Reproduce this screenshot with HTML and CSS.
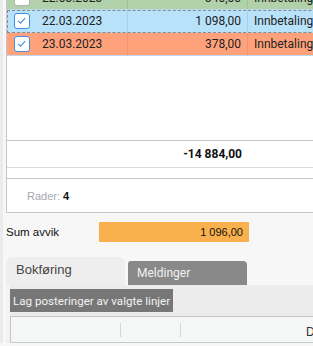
FILE: index.html
```html
<!DOCTYPE html>
<html lang="no">
<head>
    <meta charset="UTF-8">
    <meta name="viewport" content="width=device-width, initial-scale=1.0">
    <title>Bankavstemming</title>
    <link rel="stylesheet" href="styles.css">
</head>
<body>
    <div class="page">
        <!-- Transaction grid -->
        <div class="grid">
            <div class="grid-body">
                <div class="row row-green">
                    <div class="cell cell-date"><span class="check"></span>22.03.2023</div>
                    <div class="cell cell-amount">340,00</div>
                    <div class="cell cell-text">Innbetaling</div>
                </div>
                <div class="row row-blue row-focus">
                    <div class="cell cell-date">
                        <span class="check checked"><svg viewBox="0 0 16 16" width="14" height="14"><polyline points="3.5,7.8 6.3,10.4 11.6,4.8" /></svg></span>22.03.2023
                    </div>
                    <div class="cell cell-amount">1 098,00</div>
                    <div class="cell cell-text">Innbetaling</div>
                </div>
                <div class="row row-orange">
                    <div class="cell cell-date">
                        <span class="check checked"><svg viewBox="0 0 16 16" width="14" height="14"><polyline points="3.5,7.8 6.3,10.4 11.6,4.8" /></svg></span>23.03.2023
                    </div>
                    <div class="cell cell-amount">378,00</div>
                    <div class="cell cell-text">Innbetaling</div>
                </div>
            </div>
            <div class="grid-sum">
                <div class="cell cell-date"></div>
                <div class="cell cell-amount">-14 884,00</div>
            </div>
            <div class="grid-spacer"></div>
            <div class="grid-footer">
                <span class="footer-label">Rader:</span> <span class="footer-count">4</span>
            </div>
        </div>

        <!-- Deviation -->
        <div class="deviation">
            <span class="deviation-label">Sum avvik</span>
            <span class="deviation-value">1 096,00</span>
        </div>

        <!-- Tabs -->
        <div class="tabs">
            <div class="tab tab-active">Bokføring</div>
            <div class="tab tab-inactive">Meldinger</div>
        </div>
        <div class="tab-panel">
            <div class="toolbar">
                <button class="btn">Lag posteringer av valgte linjer</button>
            </div>
            <div class="subgrid">
                <div class="subgrid-head">
                    <div class="head-cell head-1"></div>
                    <div class="head-cell head-2"></div>
                    <div class="head-cell head-3"></div>
                    <div class="head-cell head-4">Debet</div>
                </div>
            </div>
        </div>
    </div>
</body>
</html>
```

FILE: styles.css
```css
html, body {
    margin: 0;
    padding: 0;
}
body {
    background-color: #f7f7f7;
    font-family: "Liberation Sans", Arial, sans-serif;
    color: #222;
    overflow: hidden;
    height: 346px;
}
.page {
    border-left: 3px solid #ebebeb;
    padding-left: 3px;
}

/* grid */
.grid {
    margin-top: -13px;
    width: 420px;
    background: #fff;
    border-left: 1px solid #c3c7cb;
    font-family: Roboto, "Liberation Sans", sans-serif;
    font-size: 12px;
}
.grid-body {
    height: 153px;
}
.row {
    display: flex;
    height: 23px;
    box-sizing: border-box;
    border-bottom: 1px solid #bcd8ea;
}
.row-green { background-color: #b0d1aa; }
.row-blue { background-color: #b8e1fa; }
.row-orange { background-color: #ffa27b; }
.row-focus {
    outline: 1px dashed #8a8a8a;
    outline-offset: -1px;
}
.cell {
    display: flex;
    align-items: center;
    box-sizing: border-box;
    white-space: nowrap;
    flex-shrink: 0;
}
.cell-date {
    width: 121px;
    padding-left: 7px;
    border-right: 1px solid rgba(0,0,0,0.08);
}
.cell-amount {
    width: 120px;
    justify-content: flex-end;
    padding-right: 6px;
    border-right: 1px solid rgba(0,0,0,0.08);
}
.cell-text {
    padding-left: 6px;
}
.check {
    width: 16px;
    height: 16px;
    box-sizing: border-box;
    border: 1px solid #b5b5b5;
    border-radius: 3px;
    background: #fff;
    margin-right: 12px;
    display: flex;
    align-items: center;
    justify-content: center;
}
.check.checked {
    border-color: #3b90e4;
}
.check svg polyline {
    fill: none;
    stroke: #3b90e4;
    stroke-width: 1.3;
}

.grid-sum {
    display: flex;
    height: 28px;
    box-sizing: border-box;
    border-top: 1px solid #c3c7cb;
    border-bottom: 1px solid #dcdcdc;
    font-weight: bold;
    color: #111;
}
.grid-sum .cell { border-right: none; }
.grid-spacer {
    height: 10px;
}
.grid-footer {
    height: 35px;
    box-sizing: border-box;
    border-top: 1px solid #c3c7cb;
    border-bottom: 1px solid #c3c7cb;
    display: flex;
    align-items: center;
    padding-left: 20px;
    font-family: "Liberation Sans", Arial, sans-serif;
    font-size: 11px;
    gap: 3px;
}
.footer-label { color: #a6a9ae; }
.footer-count { color: #111; font-weight: bold; }

/* deviation */
.deviation {
    display: flex;
    align-items: center;
    margin-top: 9px;
    font-size: 11.5px;
}
.deviation-label {
    width: 93px;
    color: #111;
}
.deviation-value {
    width: 150px;
    height: 20px;
    box-sizing: border-box;
    background-color: #f8b14c;
    text-align: right;
    padding-right: 6px;
    line-height: 20px;
    font-size: 11px;
    color: #111;
}

/* tabs */
.tabs {
    display: flex;
    align-items: flex-end;
    gap: 3px;
    margin-top: 15px;
    height: 28px;
}
.tab {
    width: 119px;
    box-sizing: border-box;
    flex-shrink: 0;
}
.tab-active {
    height: 28px;
    background-color: #eeeeee;
    border-radius: 6px 6px 0 0;
    padding: 5px 0 0 10px;
    font-size: 13px;
    color: #444;
}
.tab-inactive {
    height: 24px;
    background-color: #898989;
    border-radius: 3px 4px 0 0;
    padding: 5px 0 0 9px;
    font-family: Roboto, "Liberation Sans", sans-serif;
    font-size: 12px;
    color: #f2f2f2;
}
.tab-panel {
    background-color: #f3f3f3;
    padding-left: 4px;
}
.toolbar {
    background-color: #ececec;
    padding: 4px 0 4px 0;
}
.btn {
    display: block;
    height: 23px;
    margin: 0;
    border: none;
    padding: 0 3px;
    background-color: #777777;
    color: #f3f3f3;
    font-family: Roboto, "Liberation Sans", sans-serif;
    font-size: 11.6px;
}
.subgrid {
    background-color: #f5f6f6;
    border-left: 1px solid #c3c7cb;
    border-top: 1px solid #c3c7cb;
}
.subgrid-head {
    display: flex;
    height: 26px;
    box-sizing: border-box;
    border-bottom: 1px solid #c8cacc;
    font-size: 12px;
    color: #333;
}
.head-cell {
    height: 14px;
    margin-top: 6px;
    box-sizing: border-box;
    line-height: 14px;
    white-space: nowrap;
    flex-shrink: 0;
}
.head-1 { width: 110px; border-right: 1px solid #d6d6d6; }
.head-2 { width: 60px; border-right: 1px solid #d6d6d6; }
.head-3 { width: 119px; }
.head-4 { padding-left: 6px; margin-top: 8px; }
```
